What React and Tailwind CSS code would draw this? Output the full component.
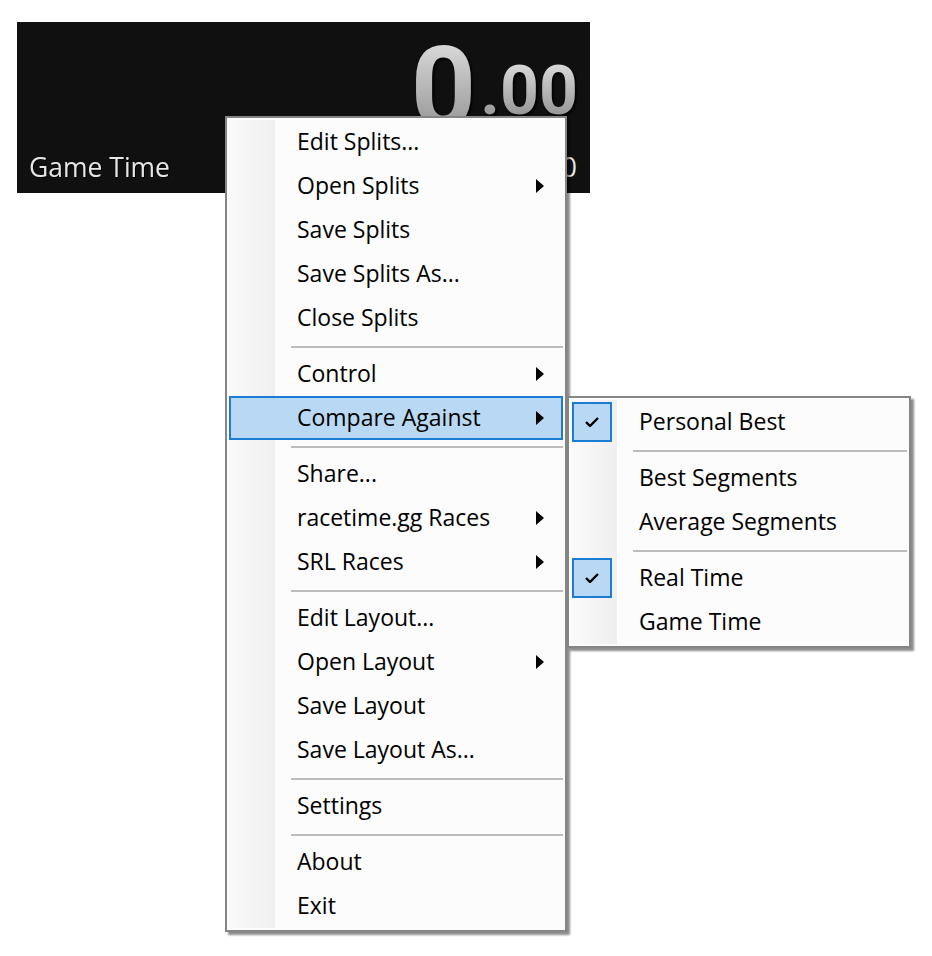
import React from "react";

const mainItems = [
  { label: "Edit Splits..." },
  { label: "Open Splits", sub: true },
  { label: "Save Splits" },
  { label: "Save Splits As..." },
  { label: "Close Splits" },
  { sep: true },
  { label: "Control", sub: true },
  { label: "Compare Against", sub: true, active: true },
  { sep: true },
  { label: "Share..." },
  { label: "racetime.gg Races", sub: true },
  { label: "SRL Races", sub: true },
  { sep: true },
  { label: "Edit Layout..." },
  { label: "Open Layout", sub: true },
  { label: "Save Layout" },
  { label: "Save Layout As..." },
  { sep: true },
  { label: "Settings" },
  { sep: true },
  { label: "About" },
  { label: "Exit" },
];

const compareItems = [
  { label: "Personal Best", checked: true },
  { sep: true },
  { label: "Best Segments" },
  { label: "Average Segments" },
  { sep: true },
  { label: "Real Time", checked: true },
  { label: "Game Time" },
];

const Arrow = () => (
  <svg width="8" height="14" viewBox="0 0 8 14">
    <path d="M0 0 L8 7 L0 14 Z" fill="#000" />
  </svg>
);

const Check = () => (
  <svg width="14" height="10" viewBox="0 0 14 10">
    <path d="M1 5 L5 9 L13 1" stroke="#000" strokeWidth="2.4" fill="none" />
  </svg>
);

const MenuList = ({ items }) => (
  <div className="border-2 border-[#858585] bg-[#fcfcfc] p-[2px] shadow-[3px_3px_2px_rgba(0,0,0,0.45)]">
    <div className="bg-[linear-gradient(90deg,#fafafa_0px,#efefef_46px,#fcfcfc_46px)]">
      {items.map((it, i) =>
        it.sep ? (
          <div key={i} className="h-[12px] pt-[6px] pl-[62px]">
            <div className="h-[2px] bg-[#bdbdbd]" />
          </div>
        ) : (
          <div
            key={i}
            className={
              "relative h-[44px] flex items-center justify-between pl-[68px] pr-[19px] " +
              (it.active ? "bg-[#b8d8f3] outline-2 -outline-offset-2 outline-[#1a7cd3]" : "")
            }
          >
            {it.checked && (
              <div className="absolute left-[1px] top-[2px] w-[40px] h-[40px] bg-[#b8d8f3] border-2 border-[#1a7cd3] flex items-center justify-center">
                <Check />
              </div>
            )}
            <span className="text-[23px] leading-[30px] pb-[3px] text-black">{it.label}</span>
            {it.sub && <Arrow />}
          </div>
        )
      )}
    </div>
  </div>
);

export default function App() {
  return (
    <div className="relative w-[932px] h-[956px] bg-white overflow-hidden font-['Open_Sans',sans-serif]">
      <div className="ml-[17px] mt-[22px] w-[573px] h-[171px] bg-[#101010] flex flex-col">
        <div className="flex justify-end items-start pr-[12px] h-[118px]">
          <span className="mt-[9px] mr-[4px] font-['Roboto',sans-serif] font-bold text-[114px] leading-none bg-[linear-gradient(#e2e2e2,#8a8a8a)] bg-clip-text text-transparent drop-shadow-[2px_2px_1px_rgba(0,0,0,0.8)]">
            0
          </span>
          <span className="mt-[35px] font-['Roboto',sans-serif] font-bold text-[68px] leading-none bg-[linear-gradient(#e2e2e2,#8a8a8a)] bg-clip-text text-transparent drop-shadow-[2px_2px_1px_rgba(0,0,0,0.8)]">
            .00
          </span>
        </div>
        <div className="flex-1 flex items-center justify-between pl-[12px] pr-[13px] pt-[2px]">
          <span className="text-[26.5px] text-[#e6e6e6] drop-shadow-[1px_1px_0px_rgba(0,0,0,0.9)]">Game Time</span>
          <span className="text-[26.5px] text-[#e6e6e6]">0.00</span>
        </div>
      </div>

      <div className="absolute left-[225px] top-[116px] w-[342px]">
        <MenuList items={mainItems} />
      </div>

      <div className="absolute left-[567px] top-[396px] w-[344px]">
        <MenuList items={compareItems} />
      </div>
    </div>
  );
}
